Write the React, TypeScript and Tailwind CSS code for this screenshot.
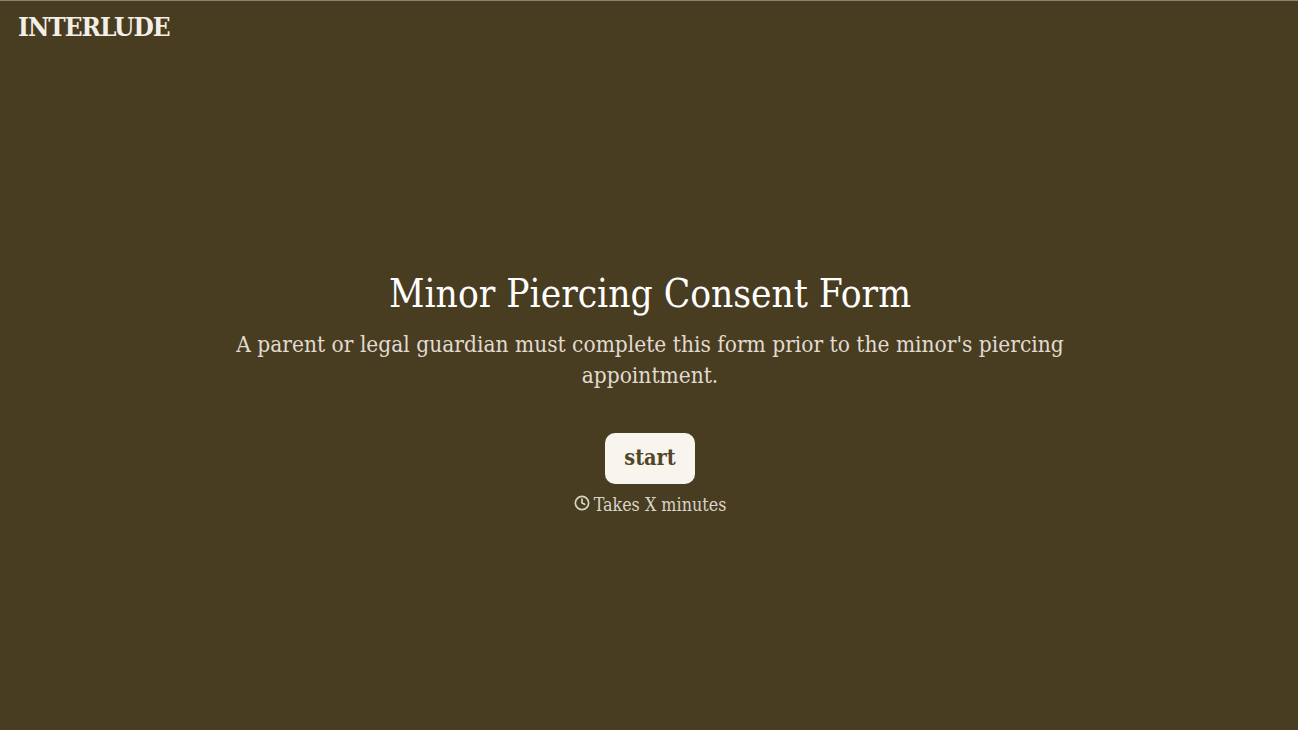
import React from "react";

export default function App() {
  return (
    <div className="h-[730px] bg-[#483c21] border-t border-t-[#8a8474] flex flex-col font-['DejaVu_Serif_Condensed','DejaVu_Serif',serif] [font-stretch:condensed] overflow-hidden">
      <div className="px-[18px] pt-[10px] h-[44px]">
        <span className="text-[26px] leading-[32px] text-[#f3efe7] font-bold tracking-[-1px] block">INTERLUDE</span>
      </div>
      <div className="flex flex-col items-center mt-[224px] pl-[2px]">
        <h1 className="text-[38.5px] leading-[50px] text-white whitespace-nowrap">Minor Piercing Consent Form</h1>
        <p className="mt-[10px] w-[840px] text-center text-[22.5px] leading-[31px] text-[#e0dbd0]">
          A parent or legal guardian must complete this form prior to the minor's piercing appointment.
        </p>
        <button className="mt-[42px] w-[90px] h-[51px] rounded-[10px] bg-[#f8f4ee] text-[#524629] text-[21.5px] font-bold">start</button>
        <div className="mt-[8px] flex items-center gap-[4px] text-[17.8px] leading-[26px] text-[#d9d4c8]">
          <svg width="16" height="16" viewBox="0 0 24 24" fill="none" stroke="currentColor" strokeWidth="2.5" strokeLinecap="round" strokeLinejoin="round" className="-translate-y-[2px]">
            <circle cx="12" cy="12" r="10" />
            <polyline points="12 6 12 12 16 14" />
          </svg>
          <span>Takes X minutes</span>
        </div>
      </div>
    </div>
  );
}
